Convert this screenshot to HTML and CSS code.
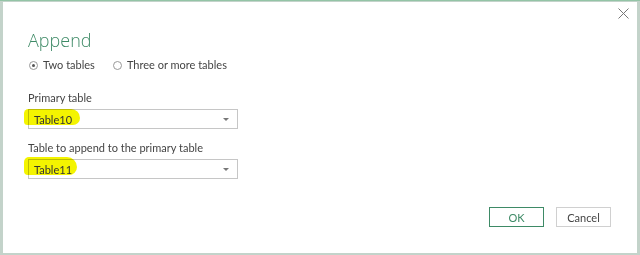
FILE: index.html
```html
<html>
	<head>
		<meta charset="UTF-8">
		<link rel="stylesheet" href="styles.css">
	</head>
	<body>
		<div class="dialog">
			<a class="close" title="Close">
				<svg width="11" height="11" viewBox="0 0 11 11"><path d="M0.5 0.5 L10.5 10.5 M10.5 0.5 L0.5 10.5" stroke="#777" stroke-width="1" fill="none"/></svg>
			</a>
			<h1>Append</h1>
			<div class="choix">
				<label><span class="radio on"></span>Two tables</label>
				<label><span class="radio"></span>Three or more tables</label>
			</div>
			<div class="champ">
				<div class="label">Primary table</div>
				<div class="liste">
					<span class="valeur">Table10</span>
					<span class="fleche"></span>
					<span class="surligne s1"></span>
				</div>
			</div>
			<div class="champ">
				<div class="label">Table to append to the primary table</div>
				<div class="liste">
					<span class="valeur">Table11</span>
					<span class="fleche"></span>
					<span class="surligne s2"></span>
				</div>
			</div>
			<div class="boutons">
				<a class="btn ok">OK</a>
				<a class="btn">Cancel</a>
			</div>
		</div>
	</body>
</html>
```

FILE: styles.css
```css
body {
	margin: 0;
	padding: 1px 0 0 3px;
	background: #c3d3ca;
	border-top: 1px solid #93c4a6;
	height: 255px;
	box-sizing: border-box;
	overflow: hidden;
	font-family: "Lato", "Liberation Sans", sans-serif;
	color: #444;
}
.dialog {
	position: relative;
	width: 634px;
	height: 251px;
	box-sizing: border-box;
	background: #fff;
	padding: 0 26px 26px 25px;
	display: flex;
	flex-direction: column;
}
.close {
	position: absolute;
	top: 6px;
	right: 8px;
}
h1 {
	font-family: "Open Sans", "Lato", sans-serif;
	font-weight: 300;
	font-size: 18px;
	color: #3e8a66;
	margin: 26px 0 0 0;
	line-height: 24px;
}
.choix {
	display: flex;
	gap: 18px;
	font-size: 11px;
	line-height: 14px;
	margin-top: 6px;
	margin-left: 1px;
}
.choix label {
	display: flex;
	align-items: center;
	gap: 5px;
}
.radio {
	width: 7px;
	height: 7px;
	border: 1px solid #999;
	border-radius: 50%;
	display: inline-block;
	position: relative;
}
.radio.on:after {
	content: "";
	position: absolute;
	left: 2px;
	top: 2px;
	width: 3px;
	height: 3px;
	border-radius: 50%;
	background: #555;
}
.champ {
	margin-top: 18px;
}
.champ + .champ {
	margin-top: 11px;
}
.label {
	font-size: 11px;
	line-height: 15px;
	margin-bottom: 4px;
}
.liste {
	position: relative;
	width: 210px;
	height: 20px;
	box-sizing: border-box;
	border: 1px solid #c6c6c6;
	display: flex;
	align-items: center;
	justify-content: space-between;
	padding: 0 8px 0 5px;
	font-size: 11px;
	color: #333;
}
.valeur {
	position: relative;
	z-index: 1;
}
.fleche {
	width: 0;
	height: 0;
	border-left: 3px solid transparent;
	border-right: 3px solid transparent;
	border-top: 3px solid #777;
}
.surligne {
	position: absolute;
	background: #f4f400;
	border-radius: 5px 10px 8px 4px;
	mix-blend-mode: multiply;
}
.s1 {
	left: -5px;
	top: -1px;
	width: 56px;
	height: 16px;
}
.s2 {
	left: -5px;
	top: -3px;
	width: 53px;
	height: 18px;
}
.boutons {
	margin-top: auto;
	display: flex;
	justify-content: flex-end;
	gap: 12px;
}
.btn {
	width: 55px;
	height: 20px;
	box-sizing: border-box;
	border: 1px solid #d0d0d0;
	display: flex;
	align-items: center;
	justify-content: center;
	font-size: 11px;
	color: #444;
}
.btn.ok {
	border-color: #3e8a66;
	color: #3e8a66;
}
```
